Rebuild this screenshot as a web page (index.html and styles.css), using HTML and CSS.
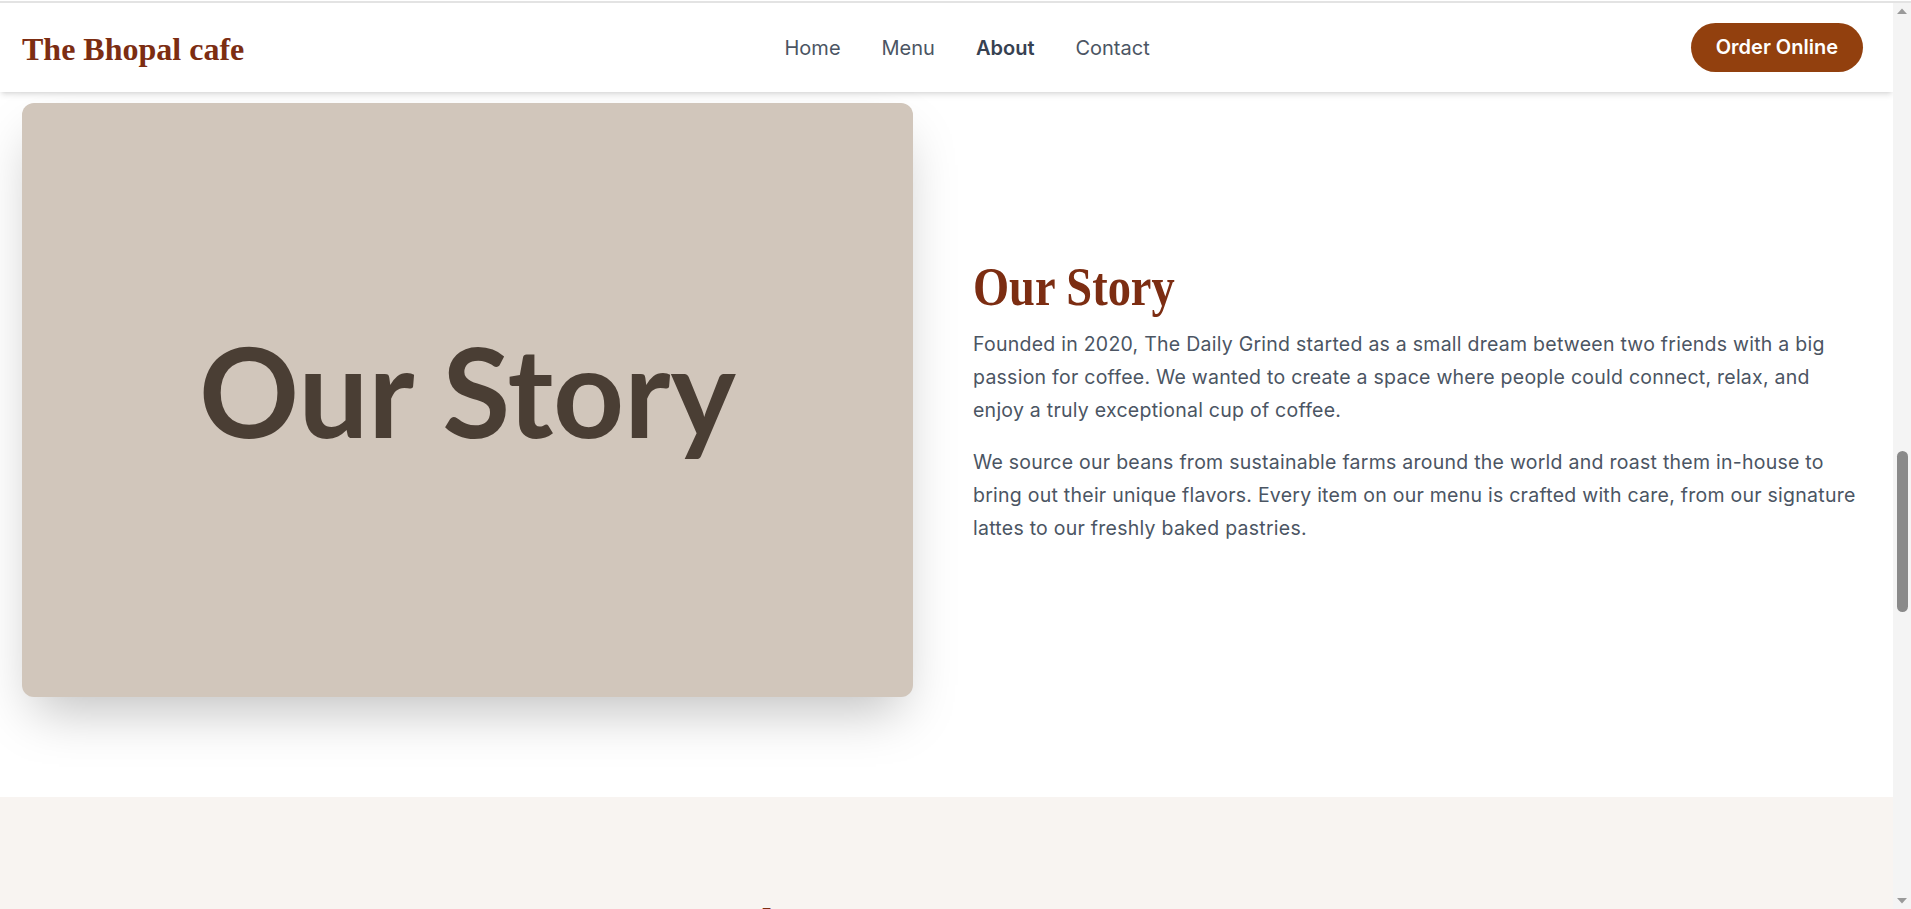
FILE: index.html
```html
<!DOCTYPE html>
<html lang="en">
<head>
<meta charset="utf-8">
<title>About - The Bhopal cafe</title>
<link rel="stylesheet" href="styles.css">
</head>
<body>
<div class="page">
  <div class="content">
    <header class="site-header">
      <div class="header-inner">
        <a class="brand" href="#">The Bhopal cafe</a>
        <nav class="nav">
          <a href="#">Home</a>
          <a href="#">Menu</a>
          <a href="#" class="active">About</a>
          <a href="#">Contact</a>
        </nav>
        <a class="order-btn" href="#">Order Online</a>
      </div>
    </header>
    <main>
      <section class="story">
        <div class="story-grid">
          <div class="story-image"><span>Our Story</span></div>
          <div class="story-text">
            <h2 class="story-title"><span>Our Story</span></h2>
            <p>Founded in 2020, The Daily Grind started as a small dream between two friends with a big passion for coffee. We wanted to create a space where people could connect, relax, and enjoy a truly exceptional cup of coffee.</p>
            <p>We source our beans from sustainable farms around the world and roast them in-house to bring out their unique flavors. Every item on our menu is crafted with care, from our signature lattes to our freshly baked pastries.</p>
          </div>
        </div>
      </section>
      <section class="testimonials">
        <h2 class="section-title"><span>What Our Customers Say</span></h2>
      </section>
    </main>
  </div>
  <div class="scrollbar" aria-hidden="true">
    <svg class="sb-arrow" width="18" height="17" viewBox="0 0 18 17"><path d="M4 11 L9 5.5 L14 11 Z" fill="#9a9a9a"/></svg>
    <div class="sb-track"><div class="sb-thumb"></div></div>
    <svg class="sb-arrow" width="18" height="17" viewBox="0 0 18 17"><path d="M4 6 L9 11.5 L14 6 Z" fill="#9a9a9a"/></svg>
  </div>
</div>
</body>
</html>
```
FILE: styles.css
```css
body {
  margin: 0;
  padding-top: 1px;
  background: #ffffff;
  font-family: Inter, "Liberation Sans", sans-serif;
  color: #4b5563;
  overflow: hidden;
}
a {
  text-decoration: none;
  color: inherit;
}
.page {
  height: 906px;
  border-top: 2px solid #e3e3e3;
  display: flex;
  overflow: hidden;
}
.content {
  flex: 1;
  min-width: 0;
  overflow: hidden;
}

/* Fake browser scrollbar */
.scrollbar {
  width: 18px;
  flex: none;
  background: #f4f4f4;
  display: flex;
  flex-direction: column;
}
.sb-arrow {
  display: block;
  flex: none;
}
.sb-track {
  flex: 1;
  padding-top: 431px;
}
.sb-thumb {
  width: 11px;
  height: 161px;
  margin-left: 4px;
  border-radius: 6px;
  background: #8a8a8a;
}

/* Header */
.site-header {
  background: #ffffff;
  box-shadow: 0 4px 6px -1px rgba(0, 0, 0, 0.1), 0 2px 4px -2px rgba(0, 0, 0, 0.1);
  position: relative;
  z-index: 2;
}
.header-inner {
  height: 89px;
  display: flex;
  align-items: center;
  padding: 0 30px 0 22px;
}
.brand {
  font-family: "Liberation Serif", "Times New Roman", serif;
  font-weight: 700;
  font-size: 32px;
  color: #7c2d12;
  line-height: 1;
  padding-top: 2px;
}
.nav {
  margin-left: auto;
  display: flex;
  gap: 41px;
  font-size: 20px;
  line-height: 28px;
}
.nav a {
  color: #4b5563;
}
.nav a.active {
  font-weight: 600;
  color: #374151;
}
.order-btn {
  margin-left: 541px;
  background: #92400e;
  color: #ffffff;
  font-size: 20px;
  font-weight: 600;
  line-height: 29px;
  padding: 10px 25px;
  border-radius: 9999px;
}

/* Story */
.story {
  padding: 11px 30px 100px 22px;
}
.story-grid {
  display: grid;
  grid-template-columns: 891px 1fr;
  column-gap: 60px;
  align-items: center;
}
.story-image {
  aspect-ratio: 3 / 2;
  background: #d1c6bb;
  border-radius: 12px;
  box-shadow: 0 25px 50px -12px rgba(0, 0, 0, 0.25);
  display: flex;
  align-items: center;
  justify-content: center;
  padding-bottom: 20px;
  box-sizing: border-box;
}
.story-image span {
  font-family: Lato, "Liberation Sans", sans-serif;
  font-weight: 700;
  font-size: 124px;
  line-height: 1.2;
  color: #4a3e34;
}
.story-title {
  margin: 0 0 10px;
  font-family: "Liberation Serif", "Times New Roman", serif;
  font-weight: 700;
  font-size: 54px;
  line-height: 62px;
  color: #7c2d12;
}
.story-title span {
  display: inline-block;
  transform: scaleX(0.86);
  transform-origin: left center;
}
.story-text p {
  margin: 0 0 19px;
  font-size: 19.5px;
  letter-spacing: 0.25px;
  line-height: 33px;
  color: #4b5563;
}
.story-text p:last-child {
  margin-bottom: 0;
}

/* Testimonials */
.testimonials {
  background: #f8f4f1;
  padding-top: 100px;
  height: 400px;
  text-align: center;
}
.section-title {
  margin: 0;
  font-family: "Liberation Serif", "Times New Roman", serif;
  font-weight: 700;
  font-size: 48px;
  line-height: 1.2;
  color: #7c2d12;
}
.section-title span {
  display: inline-block;
  transform: scaleX(0.85);
}
```
